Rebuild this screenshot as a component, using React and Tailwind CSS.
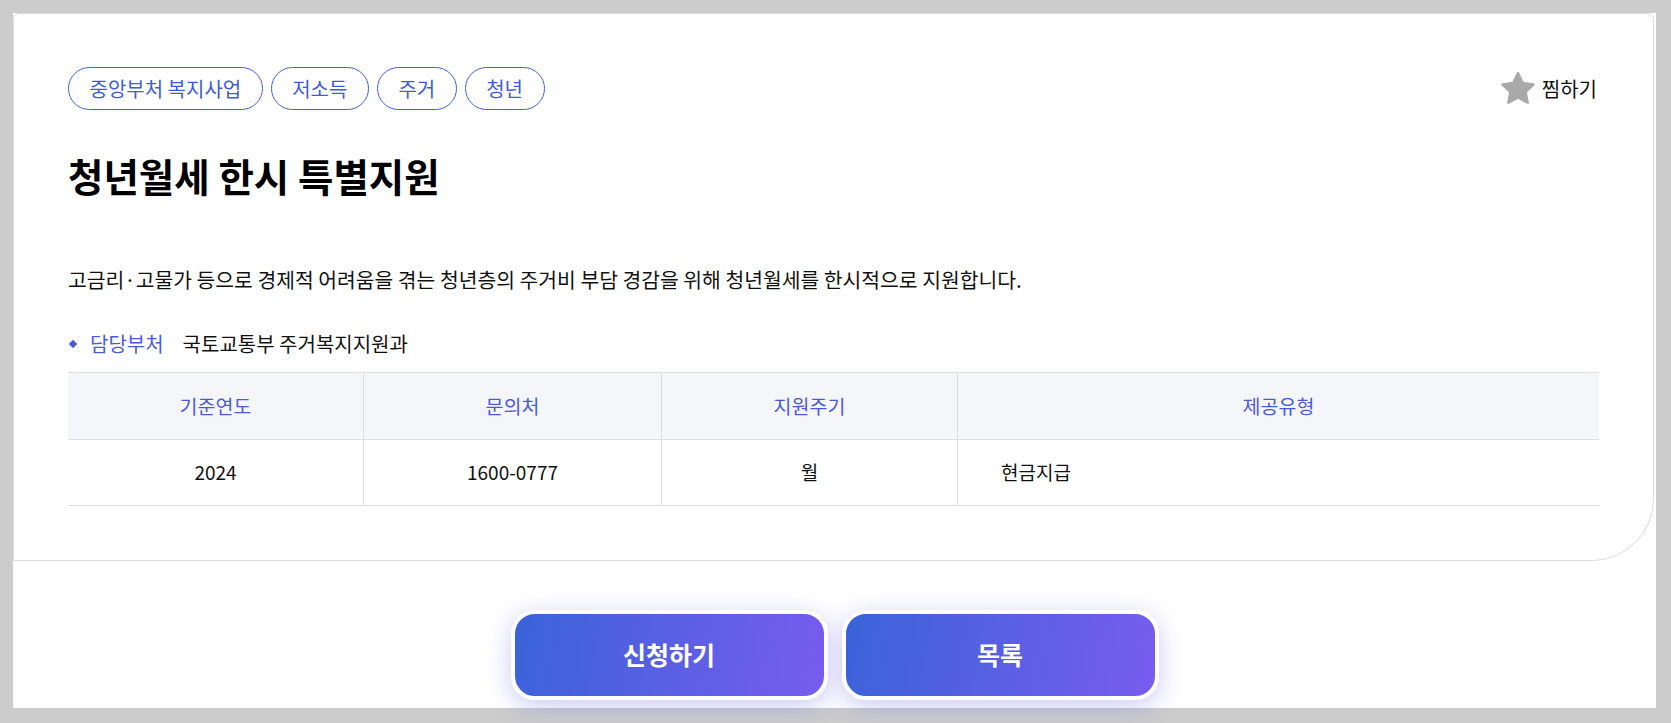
import React from 'react';

const font = { fontFamily: '"Noto Sans CJK KR", "Noto Sans", sans-serif' };

const tags = ['중앙부처 복지사업', '저소득', '주거', '청년'];

const StarIcon = () => (
    <svg width="40" height="40" viewBox="0 0 24 24" aria-hidden="true">
        <path
            d="M12 2.6l2.8 5.9 6.4.8-4.7 4.45 1.25 6.35L12 17l-5.75 3.1 1.25-6.35L2.8 9.3l6.4-.8z"
            fill="#a9a9a9"
            stroke="#a9a9a9"
            strokeWidth="1.6"
            strokeLinejoin="round"
        />
    </svg>
);

const InfoTable = () => {
    const heads = ['기준연도', '문의처', '지원주기', '제공유형'];
    return (
        <div className="mt-[14px] border-t border-b border-[#dedede]">
            <div className="grid grid-cols-[296px_298px_296px_1fr] bg-[#f5f6fa] border-b border-[#dedede] text-[19.5px] text-[#4b5bd8]">
                {heads.map((h, i) => (
                    <div key={h} className={`h-[66px] flex items-center justify-center ${i < 3 ? 'border-r border-[#dedede]' : ''}`}>
                        {h}
                    </div>
                ))}
            </div>
            <div className="grid grid-cols-[296px_298px_296px_1fr] text-[19px] text-[#111]">
                <div className="h-[65px] flex items-center justify-center border-r border-[#dedede]">2024</div>
                <div className="h-[65px] flex items-center justify-center border-r border-[#dedede]">1600-0777</div>
                <div className="h-[65px] flex items-center justify-center border-r border-[#dedede]">월</div>
                <div className="h-[65px] flex items-center pl-[43px]">현금지급</div>
            </div>
        </div>
    );
};

export default function App() {
    return (
        <div className="bg-[#cccccc] pt-[13px] pl-[13px] pr-[15px] pb-[15px]" style={font}>
            <div className="bg-white">
                <div className="mr-[2px] border border-[#dcdcdc] rounded-t-[6px] rounded-br-[62px] px-[54px] pt-[53px] pb-[54px]">
                    <div className="flex items-center justify-between">
                        <div className="flex gap-[8px]">
                            {tags.map((t) => (
                                <span
                                    key={t}
                                    className="h-[43px] px-[20.5px] flex items-center rounded-full border border-[#4261d9] text-[#3f5bd8] text-[20px]"
                                >
                                    {t}
                                </span>
                            ))}
                        </div>
                        <button className="flex items-center gap-[4px] text-[20px] text-[#111] mr-[2px]">
                            <StarIcon />
                            찜하기
                        </button>
                    </div>

                    <h1 className="mt-[42px] text-[38.5px] leading-[47px] font-bold text-black">청년월세 한시 특별지원</h1>

                    <p className="mt-[66px] text-[20.4px] leading-[29px] text-[#111]">
                        고금리·고물가 등으로 경제적 어려움을 겪는 청년층의 주거비 부담 경감을 위해 청년월세를 한시적으로 지원합니다.
                    </p>

                    <div className="mt-[36px] flex items-center h-[28px] text-[20px]">
                        <span className="w-[6px] h-[6px] bg-[#4b5bd8] rotate-45 ml-[2px] mr-[14px]"></span>
                        <span className="text-[#4b5bd8]">담당부처</span>
                        <span className="ml-[19px] text-[#111]">국토교통부 주거복지지원과</span>
                    </div>

                    <InfoTable />
                </div>

                <div className="flex justify-center gap-[14px] pt-[49px] pb-[8px]">
                    {['신청하기', '목록'].map((label) => (
                        <button
                            key={label}
                            className="w-[317px] h-[90px] rounded-[24px] border-[4px] border-white bg-[linear-gradient(100deg,#3a63d8,#785cef)] text-white text-[25px] font-bold shadow-[0_6px_26px_rgba(96,90,225,0.32)]"
                        >
                            {label}
                        </button>
                    ))}
                </div>
            </div>
        </div>
    );
}
